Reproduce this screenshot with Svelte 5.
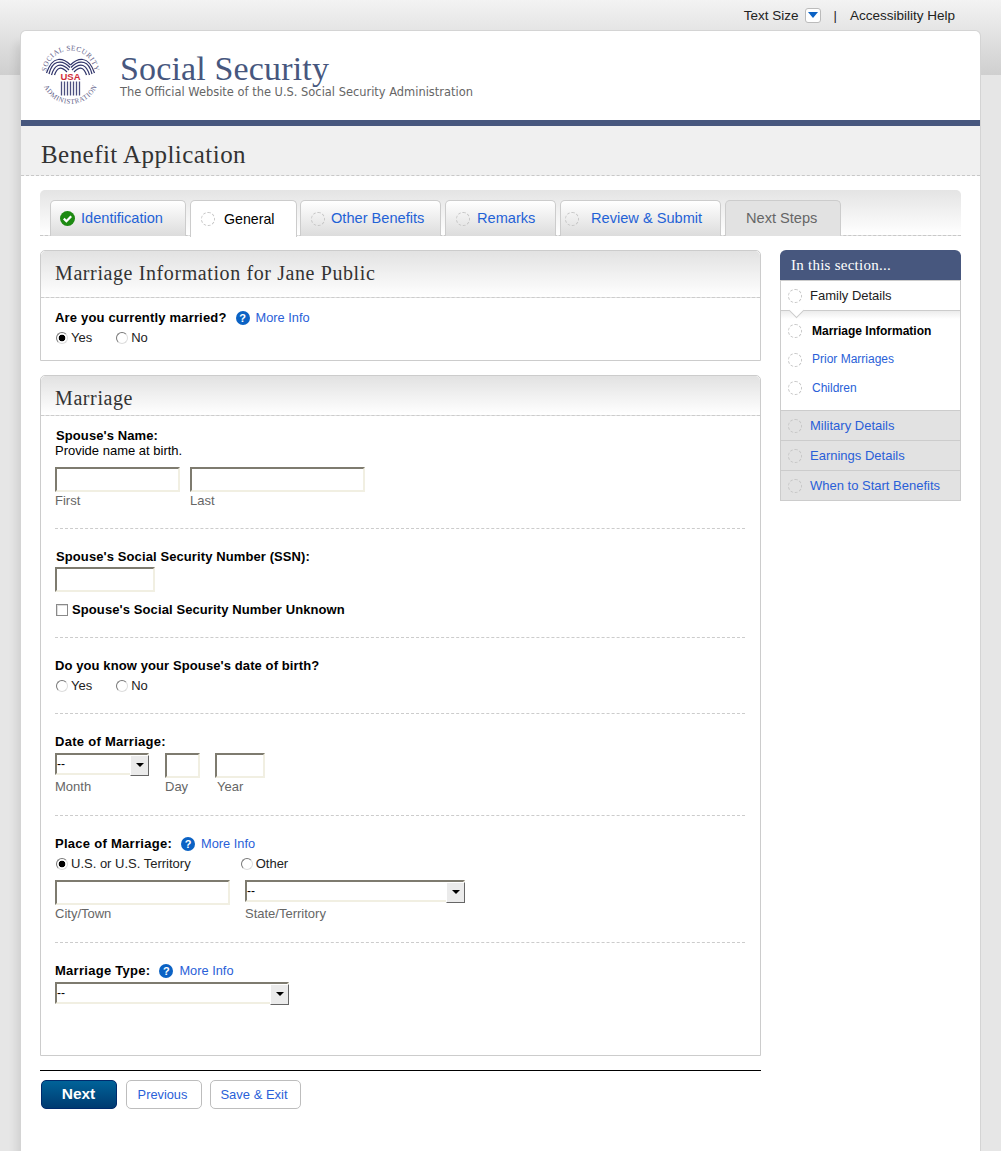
<script>
  const tabs = [
    { label: 'Identification', state: 'done', w: 136 },
    { label: 'General', state: 'active', w: 107 },
    { label: 'Other Benefits', state: 'link', w: 141 },
    { label: 'Remarks', state: 'link', w: 111 },
    { label: 'Review & Submit', state: 'link', w: 161 },
    { label: 'Next Steps', state: 'off', w: 116 }
  ];
</script>

{#snippet help()}
  <a class="help" href="#info"><span class="q">?</span><span>More Info</span></a>
{/snippet}

{#snippet radio(label, checked, name)}
  <label class="radio"><input type="radio" {name} {checked} /><span>{label}</span></label>
{/snippet}

<div class="page">
  <div class="topbar">
    <span>Text Size</span>
    <span class="sizebtn"><i></i></span>
    <span class="pipe">|</span>
    <span>Accessibility Help</span>
  </div>

  <div class="card">
    <header class="brand">
      <svg class="seal" viewBox="0 0 61 61" width="61" height="61" aria-label="Social Security Administration seal">
        <defs>
          <path id="arcTop" d="M7.5 38 A24.4 24.4 0 1 1 53.5 38" />
          <path id="arcBot" d="M1.5 33 A29.2 29.2 0 0 0 59.5 33" />
          <g id="wing" fill="none" stroke="#30346a" stroke-width="1.25">
            <path d="M30.5 20 C27 16.5 22 14 18 14.5 C13 15 9 21 6.5 28" />
            <path d="M30 22.5 C26 18 21 16.5 17 17.5 C13 18.5 10.5 23 9 29" />
            <path d="M29 25 C25 21 21 19.5 18 20.5 C15 21.5 13 25 11.5 30" />
            <path d="M27 27 C24 24 21 22.5 19 23.5 C17 24.5 15.5 27 14.5 30" />
          </g>
        </defs>
        <text class="sealtext" font-size="7.2"><textPath href="#arcTop" startOffset="50%" text-anchor="middle">SOCIAL SECURITY</textPath></text>
        <text class="sealtext" font-size="7"><textPath href="#arcBot" startOffset="50%" text-anchor="middle">ADMINISTRATION</textPath></text>
        <use href="#wing" />
        <use href="#wing" transform="translate(61 0) scale(-1 1)" />
        <text x="30.5" y="34.5" text-anchor="middle" class="usa">USA</text>
        <path stroke="#4c5080" stroke-width="1.3" d="M21.5 36.5V50.5M24.5 36.5V50.5M27.5 36.5V50.5M30.5 36.5V50.5M33.5 36.5V50.5M36.5 36.5V50.5M39.5 36.5V50.5" />
      </svg>
      <div class="brandtext">
        <div class="ss">Social Security</div>
        <div class="tag">The Official Website of the U.S. Social Security Administration</div>
      </div>
    </header>

    <div class="titlebar"><h1>Benefit Application</h1></div>

    <div class="main">
      <nav class="tabs">
        {#each tabs as t}
          <div class="tab {t.state}" style="width:{t.w}px">
            {#if t.state === 'done'}
              <svg class="check" viewBox="0 0 15 15" width="15" height="15"><circle cx="7.5" cy="7.5" r="7.5" fill="#1d8a12" /><path d="M3.8 7.6l2.6 2.6 4.8-5" fill="none" stroke="#fff" stroke-width="2.2" /></svg>
            {:else if t.state !== 'off'}
              <span class="dot"></span>
            {/if}
            <span class="tablabel">{t.label}</span>
          </div>
        {/each}
      </nav>

      <div class="columns">
        <div class="left">
          <section class="panel first">
            <h2>Marriage Information for Jane Public</h2>
            <div class="panelbody q1">
              <div class="line"><b class="ls2">Are you currently married?</b>{@render help()}</div>
              <div class="radios">
                {@render radio('Yes', true, 'married')}
                {@render radio('No', false, 'married')}
              </div>
            </div>
          </section>

          <section class="panel second">
            <h2>Marriage</h2>
            <div class="rows">
              <div class="row r1">
                <div class="line nudge"><b>Spouse's Name:</b></div>
                <div class="line">Provide name at birth.</div>
                <div class="fields mt9">
                  <div class="field"><input class="w125" aria-label="First" /><small>First</small></div>
                  <div class="field"><input class="w175" aria-label="Last" /><small>Last</small></div>
                </div>
              </div>

              <div class="row">
                <div class="line nudge"><b>Spouse's Social Security Number (SSN):</b></div>
                <div class="fields mt3"><input class="w100" aria-label="SSN" /></div>
                <label class="checkrow"><input type="checkbox" /><b>Spouse's Social Security Number Unknown</b></label>
              </div>

              <div class="row">
                <div class="line"><b>Do you know your Spouse's date of birth?</b></div>
                <div class="radios">
                  {@render radio('Yes', false, 'dob')}
                  {@render radio('No', false, 'dob')}
                </div>
              </div>

              <div class="row pb21">
                <div class="line"><b class="ls">Date of Marriage:</b></div>
                <div class="fields mt4 date">
                  <div class="field">
                    <span class="sel w94"><select aria-label="Month"><option>--</option></select></span>
                    <small class="under">Month</small>
                  </div>
                  <div class="field"><input class="w35" aria-label="Day" /><small>Day</small></div>
                  <div class="field"><input class="w50" aria-label="Year" /><small class="year">Year</small></div>
                </div>
              </div>

              <div class="row pb21">
                <div class="line"><b class="ls">Place of Marriage:</b>{@render help()}</div>
                <div class="radios wide">
                  {@render radio('U.S. or U.S. Territory', true, 'place')}
                  {@render radio('Other', false, 'place')}
                </div>
                <div class="fields mt9 place">
                  <div class="field"><input class="w175" aria-label="City/Town" /><small>City/Town</small></div>
                  <div class="field">
                    <span class="sel w220"><select aria-label="State/Territory"><option>--</option></select></span>
                    <small class="under">State/Territory</small>
                  </div>
                </div>
              </div>

              <div class="row last">
                <div class="line"><b class="ls">Marriage Type:</b>{@render help()}</div>
                <div class="fields mt4">
                  <span class="sel w235"><select aria-label="Marriage Type"><option>--</option></select></span>
                </div>
              </div>
            </div>
          </section>

          <div class="actions">
            <button class="next">Next</button>
            <button class="ghost prev">Previous</button>
            <button class="ghost save">Save &amp; Exit</button>
          </div>
        </div>

        <aside class="side">
          <h3>In this section...</h3>
          <div class="sitem current"><span class="dot"></span><span>Family Details</span></div>
          <div class="sub">
            <div class="subitem strong"><span class="dot"></span><span>Marriage Information</span></div>
            <div class="subitem"><span class="dot"></span><span>Prior Marriages</span></div>
            <div class="subitem"><span class="dot"></span><span>Children</span></div>
          </div>
          <div class="sitem"><span class="dot"></span><span>Military Details</span></div>
          <div class="sitem"><span class="dot"></span><span>Earnings Details</span></div>
          <div class="sitem"><span class="dot"></span><span>When to Start Benefits</span></div>
        </aside>
      </div>
    </div>
  </div>
</div>

<style>
  :global(body) { background: #fff; font-family: "Liberation Sans", Arial, sans-serif; color: #000; }
  * { box-sizing: border-box; }
  .page {
    width: 1001px; height: 1151px; overflow: hidden; padding: 0 21px;
    background: linear-gradient(#f3f3f3 0, #cfcfcf 75px, #e6e6e6 75px);
    font-size: 13px; line-height: 15px;
  }
  .topbar { height: 31px; display: flex; justify-content: flex-end; align-items: center; padding: 0 25px 1px 0; color: #222; font-size: 13.5px; }
  .sizebtn { width: 16px; height: 15px; margin: 0 13px 0 6px; background: #fff; border: 1px solid #bbb; border-radius: 3px; display: flex; align-items: center; justify-content: center; }
  .sizebtn i { width: 0; height: 0; border: 5px solid transparent; border-top: 6px solid #0b62c4; border-bottom: 0; }
  .pipe { margin-right: 13px; font-size: 13px; }

  .card { width: 959px; height: 1120px; background: #fff; border-radius: 5px 5px 0 0; box-shadow: 0 0 0 1px #d4d4d4, -7px 10px 9px -2px rgba(0,0,0,.09); }
  .brand { height: 89px; padding: 14px 0 0 19px; display: flex; gap: 19px; }
  .seal { overflow: visible; flex: none; }
  .brandtext { padding-top: 7px; }
  .ss { font: 34px/34px "Liberation Serif", serif; color: #47577e; letter-spacing: .15px; }
  .tag { font: 11.45px/14px "DejaVu Sans", sans-serif; color: #666; margin-top: -1px; }
  .sealtext { font-family: "Liberation Serif", serif; fill: #5f6188; letter-spacing: .5px; }
  .usa { font: bold 9.5px "Liberation Sans", sans-serif; fill: #d02c3a; }

  .titlebar { height: 56px; border-top: 6px solid #47577e; border-bottom: 1px dashed #c8c8c8; background: #f0f0f0; padding: 15px 0 0 20px; }
  h1 { margin: 0; font: 400 25px/28px "Liberation Serif", serif; color: #333; letter-spacing: .45px; }

  .main { padding: 14px 19px 0; }
  .tabs { height: 46px; display: flex; gap: 4px; padding: 10px 0 0 10px; background: linear-gradient(#e4e4e4, #fff); border-radius: 5px 5px 0 0; border-bottom: 1px dashed #c8c8c8; }
  .tab { height: 36px; flex: none; display: flex; align-items: center; padding-left: 10px; gap: 6px; border: 1px solid #ccc; border-bottom: 0; border-radius: 5px 5px 0 0; background: linear-gradient(#fff, #dcdcdc); font-size: 14.6px; color: #1f62d6; }
  .tab.active { background: #fff; color: #000; gap: 9px; height: 37px; margin-right: -1px; font-size: 14.2px; }
  .tab.done { padding-left: 9px; gap: 6px; }
  .tab.off { background: #e2e2e2; color: #666; padding-left: 20px; }
  .tab:nth-child(4) { gap: 7px; }
  .tab.link:nth-child(5) { padding-left: 4px; gap: 12px; }
  .check { flex: none; }
  .dot { flex: none; width: 14px; height: 14px; border: 1px dashed #c6c6c6; border-radius: 50%; }

  .columns { display: flex; gap: 19px; padding-top: 14px; align-items: flex-start; }
  .left { width: 721px; }

  .panel { border: 1px solid #ccc; border-radius: 5px 5px 0 0; }
  .first { height: 111px; }
  .second { height: 681px; margin-top: 14px; }
  h2 { margin: 0; height: 47px; padding: 11px 14px 0; font: 400 20px/22px "Liberation Serif", serif; color: #333; letter-spacing: .6px; border-bottom: 1px dashed #ccc; background: linear-gradient(#e2e2e2, #fff); border-radius: 5px 5px 0 0; }
  .second h2 { height: 40px; padding-top: 11px; }
  .panelbody { padding: 12px 14px 0; }
  .line { display: flex; align-items: center; height: 15px; }
  .nudge { padding-left: 1px; }
  b { font-weight: 700; letter-spacing: .1px; }
  b.ls { letter-spacing: .28px; }
  b.ls2 { letter-spacing: .18px; }
  .help { display: inline-flex; align-items: center; gap: 6px; margin-left: 9px; color: #2a5fd8; text-decoration: none; font-size: 12.8px; }
  .q { width: 14px; height: 14px; border-radius: 50%; background: #0b62c4; color: #fff; font: bold 11px/14px "Liberation Sans", sans-serif; text-align: center; }

  .radios { display: flex; gap: 23px; margin-top: 5px; }
  .radios.wide { gap: 49px; }
  .radio { display: inline-flex; align-items: center; gap: 3px; height: 15px; color: #222; }
  .radio input { appearance: none; width: 12px; height: 12px; margin: 0 0 0 1px; border-radius: 50%; border: 1px solid #7a7a7a; border-color: #777 #ddd #ddd #777; background: #fff; }
  .radio input:checked { background: radial-gradient(circle, #000 0 3.2px, #fff 3.6px); }

  .rows { padding: 0 15px 0 14px; }
  .row { padding: 20px 0; border-bottom: 1px dashed #ccc; }
  .row.r1 { padding-top: 12px; }
  .pb21 { padding-bottom: 21px; }
  .row.last { border-bottom: 0; }

  .fields { display: flex; gap: 10px; }
  .mt3 { margin-top: 3px; } .mt4 { margin-top: 4px; } .mt9 { margin-top: 9px; }
  .date { gap: 15px; }
  .date .field:first-child { width: 95px; }
  .place { gap: 15px; }
  .field { display: flex; flex-direction: column; }
  small { font-size: 13px; line-height: 15px; color: #666; margin-top: 1px; }
  small.under { margin-top: 4px; }
  small.year { padding-left: 2px; }
  input:not([type]) { height: 25px; border: 2px solid; border-color: #7e7b6f #f1efe2 #f1efe2 #7e7b6f; background: #fff; padding: 0; display: block; }
  .w35 { width: 35px; } .w50 { width: 50px; } .w100 { width: 100px; } .w125 { width: 125px; } .w175 { width: 175px; }

  .checkrow { display: flex; align-items: center; gap: 4px; margin-top: 10px; height: 15px; }
  .checkrow input { appearance: none; width: 12px; height: 12px; margin: 0 0 0 1px; border: 1px solid #8a8a8a; box-shadow: inset 1px 1px 0 #ddd; background: #fff; }

  .sel { display: block; height: 22px; position: relative; }
  .w94 { width: 94px; } .w220 { width: 220px; } .w235 { width: 234px; }
  select { appearance: none; display: block; width: 100%; height: 22px; padding: 0; border: 2px solid; border-color: #7e7b6f #f1efe2 #f1efe2 #7e7b6f; background: #fff; border-radius: 0; font: 12px "Liberation Sans", sans-serif; color: #000; }
  .sel::after { content: ""; position: absolute; top: 2px; right: 0; width: 17px; height: 19px; background: #ebebeb; border: 1px solid; border-color: #fff #666 #666 #fff; }
  .sel::before { content: ""; position: absolute; z-index: 1; top: 10px; right: 5px; width: 0; height: 0; border: 4px solid transparent; border-top: 4px solid #000; border-bottom: 0; }

  .actions { margin-top: 14px; padding: 9px 0 0 1px; border-top: 1px solid #000; display: flex; gap: 9px; }
  button { height: 29px; padding: 0; border-radius: 5px; font-family: "Liberation Sans", sans-serif; cursor: pointer; }
  .next { width: 76px; border: 1px solid #002a6c; background: linear-gradient(#006399, #003a70); color: #fff; font-weight: 700; font-size: 15.5px; padding: 0 1px 2px 0; }
  .ghost { background: #fff; border: 1px solid #bdbdbd; color: #2a5fd8; font-size: 13px; padding-right: 3px; }
  .prev { width: 76px; font-size: 12.8px; } .save { width: 91px; margin-left: -1px; }

  .side { width: 181px; font-size: 13px; }
  h3 { margin: 0; height: 30px; padding: 7px 11px 0; background: #47577e; color: #fff; border-radius: 6px 6px 0 0; font: 400 15px/16px "Liberation Serif", serif; letter-spacing: .25px; }
  .sitem { height: 30px; display: flex; align-items: center; gap: 8px; padding-left: 7px; background: #e2e2e2; border: 1px solid #ccc; border-top: 0; color: #2a5fd8; }
  .sitem.current { background: #fff; color: #222; height: 31px; border-top: 1px solid #ccc; }
  .sub { height: 100px; padding-top: 6px; background: linear-gradient(#ececec, #fff 8px); border: 1px solid #ccc; border-top: 0; position: relative; }
  .sub::before { content: ""; position: absolute; top: -6px; left: 10px; width: 10px; height: 10px; background: #fff; border: 1px solid #ccc; border-width: 0 1px 1px 0; transform: rotate(45deg); }
  .subitem { height: 28.6px; display: flex; align-items: center; gap: 10px; padding-left: 7px; color: #2a5fd8; font-size: 12px; position: relative; }
  .subitem.strong { color: #000; font-weight: 700; }
</style>
